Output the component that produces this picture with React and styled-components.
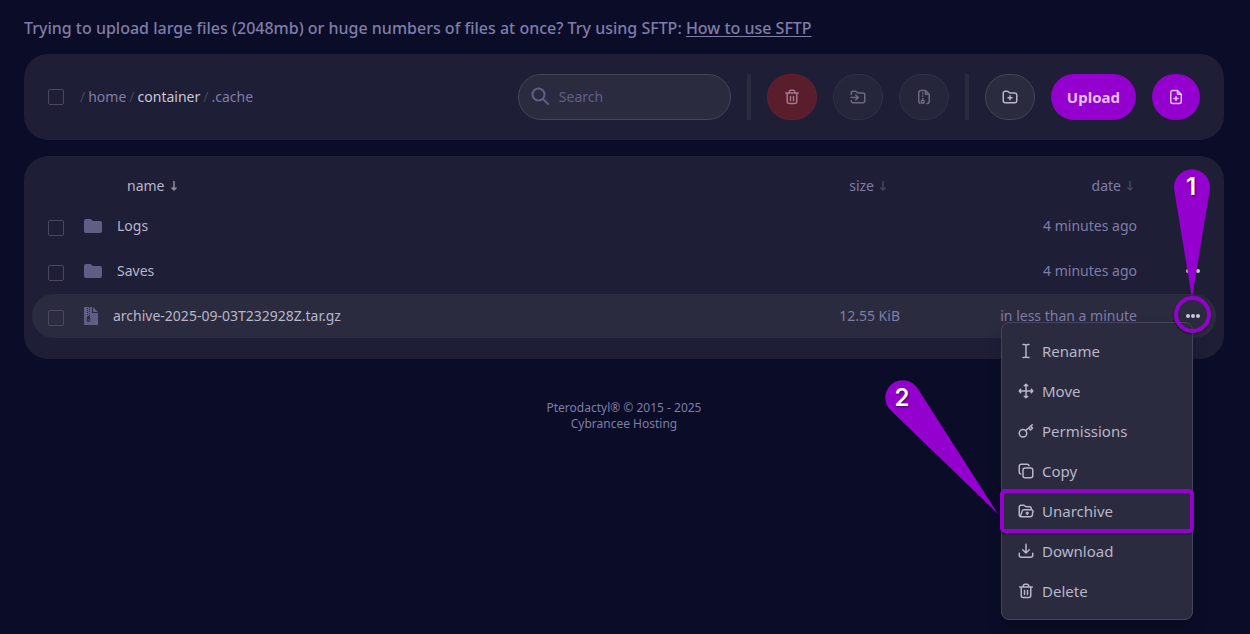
import React from 'react';
import styled, { createGlobalStyle, css } from 'styled-components';

const GlobalStyle = createGlobalStyle`
  * {
    box-sizing: border-box;
  }

  body {
    margin: 0;
    background: #0b0c28;
    color: #b8b6c9;
    font-family: "Noto Sans", "Open Sans", sans-serif;
    font-size: 14px;
    line-height: 20px;
  }

  button,
  input {
    font: inherit;
    color: inherit;
  }
`;

const Page = styled.main`
  min-height: 100vh;
  padding: 16px 26px 16px 24px;
`;

const Notice = styled.p`
  margin: 0 0 14px;
  font-size: 16px;
  font-weight: 500;
  line-height: 24px;
  color: #7f7da7;

  a {
    color: inherit;
    text-decoration: underline;
    text-underline-offset: 2px;
  }
`;

const Panel = styled.section`
  background: #1e1e37;
  border-radius: 24px;
`;

const Toolbar = styled(Panel)`
  display: flex;
  align-items: center;
  gap: 16px;
  padding: 20px 24px;
  margin-bottom: 16px;
`;

const Checkbox = styled.input.attrs({ type: 'checkbox' })`
  appearance: none;
  display: block;
  flex: none;
  width: 16px;
  height: 16px;
  margin: 0;
  border: 1px solid #4a4860;
  border-radius: 2px;
  background: transparent;

  &:checked {
    background: #9400cd;
  }
`;

const Breadcrumbs = styled.nav`
  display: flex;
  flex: 1;
  gap: 3px;
  color: #46455c;

  a {
    color: #7f7da7;
    text-decoration: none;
  }

  a[data-active='true'] {
    color: #c9c7d8;
  }
`;

const SearchBox = styled.label`
  display: flex;
  align-items: center;
  gap: 8px;
  width: 213px;
  height: 46px;
  padding: 0 12px;
  border: 1px solid #46445c;
  border-radius: 23px;
  background: #2b2b3f;
  color: #605e85;

  svg {
    flex: none;
  }

  input {
    width: 100%;
    min-width: 0;
    padding: 0;
    border: 0;
    outline: 0;
    background: none;
  }

  input::placeholder {
    color: #605e85;
    opacity: 1;
  }
`;

const Divider = styled.span`
  align-self: stretch;
  width: 4px;
  background: #2b2b3f;
`;

const variants = {
  neutral: css`
    border: 1px solid #46445c;
    background: #2b2b3f;
    color: #b8b6c9;
  `,
  danger: css`
    border: 1px solid #6c1e31;
    background: #591d2b;
    color: #a17a8a;
  `,
  disabled: css`
    border: 1px solid #31304a;
    background: #25253b;
    color: #6b6a82;
  `,
  primary: css`
    border: 0;
    background: #9400cd;
    color: #e3c0f2;
  `,
};

const Button = styled.button`
  display: flex;
  flex: none;
  align-items: center;
  justify-content: center;
  height: 46px;
  padding: 0 16px;
  border-radius: 23px;
  font-size: 15px;
  font-weight: 700;
  ${({ $variant }) => variants[$variant]}
`;

const FilesPanel = styled(Panel)`
  padding: 11px 8px 20px;
`;

const FileTable = styled.table`
  width: 100%;
  table-layout: fixed;
  border-collapse: separate;
  border-spacing: 0 1px;

  th,
  td {
    padding: 0;
    font-weight: 400;
    text-align: left;
  }
`;

const HeadRow = styled.tr`
  height: 35px;
`;

const CheckHead = styled.th`
  width: 52px;
`;

const SizeHead = styled.th`
  width: 200px;
`;

const DateHead = styled.th`
  width: 237px;
`;

const MenuHead = styled.th`
  width: 79px;
`;

const SortButton = styled.button`
  display: flex;
  align-items: center;
  gap: 5px;
  margin-left: ${({ $end }) => ($end ? 'auto' : '43px')};
  margin-right: ${({ $inset }) => ($inset ? '13px' : '3px')};
  padding: 0;
  border: 0;
  background: none;
  color: ${({ $active }) => ($active ? '#b8b6c9' : '#7f7da7')};

  svg {
    color: ${({ $active }) => ($active ? '#8e8c9f' : '#46455c')};
  }
`;

const Row = styled.tr`
  height: 44px;

  td {
    background: ${({ $active }) => ($active ? '#2b2b3f' : 'transparent')};
  }

  td:first-child {
    padding: 4px 0 0 16px;
    border-radius: 22px 0 0 22px;
  }

  td:last-child {
    border-radius: 0 22px 22px 0;
  }
`;

const FileLink = styled.a`
  display: flex;
  align-items: center;
  gap: 15px;
  color: #b8b6c9;
  text-decoration: none;

  svg {
    color: #605e85;
  }
`;

const Meta = styled.span`
  display: block;
  text-align: right;
  color: #7f7da7;
`;

const MenuCell = styled.td`
  position: relative;
`;

const MoreButton = styled.button`
  display: flex;
  align-items: center;
  justify-content: center;
  width: 36px;
  height: 36px;
  margin-left: 38px;
  padding: 0;
  border: 0;
  border-radius: 50%;
  background: none;
  color: #c9c7d8;
`;

const Menu = styled.ul`
  position: absolute;
  top: 28px;
  right: 23px;
  z-index: 1;
  width: 192px;
  margin: 0;
  padding: 8px 0;
  list-style: none;
  border: 1px solid #46445c;
  border-radius: 8px;
  background: #2b2b3f;
  box-shadow: 0 8px 16px rgba(0, 0, 0, 0.2);
`;

const MenuItem = styled.button`
  position: relative;
  display: flex;
  align-items: center;
  gap: 8px;
  width: 100%;
  height: 40px;
  padding: 0 16px;
  border: 0;
  background: none;
  color: #b8b6c9;
  font-size: 15px;

  ${({ $marked }) => $marked && css`
    &::after {
      content: '';
      position: absolute;
      inset: -2px;
      border: 4px solid #9400cd;
      border-radius: 5px;
      box-shadow: 0 1px 2px rgba(0, 0, 0, 0.6);
    }
  `}
`;

const Ring = styled.span`
  position: absolute;
  top: 2px;
  right: 5px;
  z-index: 2;
  width: 37px;
  height: 37px;
  border: 4px solid #9400cd;
  border-radius: 50%;
  box-shadow: 0 1px 2px rgba(0, 0, 0, 0.6);
  pointer-events: none;
`;

const Callout = styled.span`
  position: absolute;
  top: ${({ $top }) => $top}px;
  right: ${({ $right }) => $right}px;
  z-index: 2;
  pointer-events: none;

  svg {
    display: block;
  }

  b {
    position: absolute;
    top: 0;
    left: 0;
    width: 34px;
    color: #fff;
    font-family: Inter, "Liberation Sans", sans-serif;
    font-size: 24px;
    font-weight: 600;
    line-height: 36px;
    text-align: center;
    text-shadow: 1px 1px 2px rgba(0, 0, 0, 0.5);
  }
`;

const Footer = styled.footer`
  padding-top: 41px;
  font-size: 12px;
  line-height: 16px;
  text-align: center;
  color: #7f7da7;

  p {
    margin: 0;
  }
`;

const Icon = ({ size = 16, children }) => (
  <svg
    width={size}
    height={size}
    viewBox="0 0 16 16"
    fill="none"
    stroke="currentColor"
    strokeWidth="1.5"
    strokeLinecap="round"
    strokeLinejoin="round"
    aria-hidden="true"
  >
    {children}
  </svg>
);

const TrashIcon = () => (
  <Icon>
    <path d="M1.75 4h12.5M5.25 3.75V3A1.75 1.75 0 0 1 7 1.25h2A1.75 1.75 0 0 1 10.75 3v.75M3.25 4.5v8a2 2 0 0 0 2 2h5.5a2 2 0 0 0 2-2v-8M6.5 7.5v4M9.5 7.5v4" />
  </Icon>
);

const MoveToIcon = () => (
  <Icon>
    <path d="M1.25 5.5V4A1.75 1.75 0 0 1 3 2.25h2.2c.5 0 .9.2 1.2.5l.7.7c.3.3.7.5 1.2.5H13A1.75 1.75 0 0 1 14.75 5.7V12A1.75 1.75 0 0 1 13 13.75H3A1.75 1.75 0 0 1 1.25 12v-.5M1 8.5h7M5.75 6l2.5 2.5L5.75 11" />
  </Icon>
);

const FileZipIcon = () => (
  <Icon>
    <path d="M4 14.25A1.5 1.5 0 0 1 2.75 12.75V3.5A2 2 0 0 1 4.75 1.5H9.5L13.25 5.25v7.25a2 2 0 0 1-2 2H11M9.5 1.75V5.25H13" />
    <path d="M6.75 4v.5M6.75 6.75v.5M6.75 9.5v1" />
    <circle cx="6.75" cy="12.75" r="1.5" />
  </Icon>
);

const FolderPlusIcon = () => (
  <Icon>
    <path d="M1.25 4.25A2 2 0 0 1 3.25 2.25h1.9c.5 0 .9.2 1.2.5l.7.7c.3.3.7.5 1.2.5h4.5a2 2 0 0 1 2 2v5.8a2 2 0 0 1-2 2h-9.5a2 2 0 0 1-2-2zM8 6.75v4M6 8.75h4" />
  </Icon>
);

const FilePlusIcon = () => (
  <Icon>
    <path d="M2.75 3.5a2 2 0 0 1 2-2H9.5L13.25 5.25v7.25a2 2 0 0 1-2 2h-6.5a2 2 0 0 1-2-2zM9.5 1.75V5.25H13M8 7.5v4M6 9.5h4" />
  </Icon>
);

const CursorIcon = () => (
  <Icon>
    <path d="M5 1.5h1.25C7.25 1.5 8 2 8 2.75 8 2 8.75 1.5 9.75 1.5H11M5 14.5h1.25c1 0 1.75-.5 1.75-1.25 0 .75.75 1.25 1.75 1.25H11M8 2.75v10.5" />
  </Icon>
);

const ArrowsIcon = () => (
  <Icon>
    <path d="M8 1.25v13.5M1.25 8h13.5M6.25 2.75 8 1.25l1.75 1.5M6.25 13.25 8 14.75l1.75-1.5M2.75 6.25 1.25 8l1.5 1.75M13.25 6.25 14.75 8l-1.5 1.75" />
  </Icon>
);

const KeyIcon = () => (
  <Icon>
    <circle cx="5" cy="10.25" r="3.75" />
    <path d="m7.75 7.5 6.5-5.75M11 5l1.5 2 2-1.75L13 3.25" />
  </Icon>
);

const CopyIcon = () => (
  <Icon>
    <rect x="5" y="5" width="9.75" height="9.75" rx="2" />
    <path d="M2.75 11A1.75 1.75 0 0 1 1.25 9.25V3.25a2 2 0 0 1 2-2h6A1.75 1.75 0 0 1 11 2.75" />
  </Icon>
);

const UnarchiveIcon = () => (
  <Icon>
    <path d="M13.25 6V5.5a1.75 1.75 0 0 0-1.75-1.75H8.5c-.5 0-.9-.2-1.2-.5l-.5-.5c-.3-.3-.7-.5-1.2-.5H3A1.75 1.75 0 0 0 1.25 4v7.75a2 2 0 0 0 2 2h9.2a2 2 0 0 0 1.9-1.5l.5-3.5A1.5 1.5 0 0 0 13.4 6.75H6a2 2 0 0 0-1.9 1.4L2.5 13.25M9.25 11.5V9.5M8.25 10l1-.75 1 .75" />
  </Icon>
);

const DownloadIcon = () => (
  <Icon>
    <path d="M8 1.25v8.5M4.75 6.75 8 10l3.25-3.25M1.25 10.25v2a2 2 0 0 0 2 2h9.5a2 2 0 0 0 2-2v-2" />
  </Icon>
);

const DotsIcon = () => (
  <svg width="16" height="16" viewBox="0 0 16 16" fill="currentColor" aria-hidden="true">
    <circle cx="3" cy="8" r="2" />
    <circle cx="8" cy="8" r="2" />
    <circle cx="13" cy="8" r="2" />
  </svg>
);

const SearchIcon = () => (
  <svg width="20" height="20" viewBox="0 0 20 20" fill="none" stroke="currentColor" strokeWidth="2" strokeLinecap="round" aria-hidden="true">
    <circle cx="7.5" cy="7.5" r="6" />
    <path d="m12 12 5 5" />
  </svg>
);

const SortIcon = () => (
  <svg width="8" height="12" viewBox="0 0 8 12" fill="none" stroke="currentColor" strokeWidth="1.5" aria-hidden="true">
    <path d="M4 1v9M1.5 7.5 4 10l2.5-2.5" />
  </svg>
);

const FolderIcon = () => (
  <svg width="18" height="14" viewBox="0 0 18 14" fill="currentColor" aria-hidden="true">
    <path d="M0 2a2 2 0 0 1 2-2h4.5L9 2h7a2 2 0 0 1 2 2v8a2 2 0 0 1-2 2H2a2 2 0 0 1-2-2z" />
  </svg>
);

const ArchiveIcon = () => (
  <svg width="14" height="18" viewBox="0 0 14 18" aria-hidden="true">
    <path fill="currentColor" d="M0 0h8v6h6v12H0zM9 0l5 5H9z" />
    <path fill="none" stroke="#2b2b3f" strokeDasharray="1 1" d="M3.5 1v8M5.5 0v9" />
    <path fill="#2b2b3f" d="M3.5 9h2l1 4a2 2 0 0 1-4 0z" />
    <path fill="currentColor" d="M3.5 12.5h2v1h-2z" />
  </svg>
);

const crumbs = ['home', 'container', '.cache'];

const files = [
  { name: 'Logs', folder: true, date: '4 minutes ago' },
  { name: 'Saves', folder: true, date: '4 minutes ago' },
  {
    name: 'archive-2025-09-03T232928Z.tar.gz',
    size: '12.55 KiB',
    date: 'in less than a minute',
    open: true,
  },
];

const actions = [
  { label: 'Rename', icon: CursorIcon },
  { label: 'Move', icon: ArrowsIcon },
  { label: 'Permissions', icon: KeyIcon },
  { label: 'Copy', icon: CopyIcon },
  { label: 'Unarchive', icon: UnarchiveIcon, marked: true },
  { label: 'Download', icon: DownloadIcon },
  { label: 'Delete', icon: TrashIcon },
];

const FileMenu = () => (
  <Menu>
    {actions.map(({ label, icon: ActionIcon, marked }) => (
      <li key={label}>
        <MenuItem type="button" $marked={marked}>
          <ActionIcon />
          {label}
        </MenuItem>
      </li>
    ))}
  </Menu>
);

const Callouts = () => (
  <>
    <Ring />
    <Callout $top={-125} $right={6}>
      <svg width="36" height="130" viewBox="0 0 36 130">
        <path fill="#9400cd" d="M35.8 21 18 129 .2 21A18 18 0 1 1 35.8 21z" />
      </svg>
      <b>1</b>
    </Callout>
    <Callout $top={86} $right={217}>
      <svg width="114" height="135" viewBox="0 0 114 135">
        <path fill="#9400cd" d="M32.7 8.6 113 134 5.9 30.6A17.5 17.5 0 1 1 32.7 8.6z" />
      </svg>
      <b>2</b>
    </Callout>
  </>
);

const FileRow = ({ file }) => (
  <Row $active={file.open}>
    <td>
      <Checkbox aria-label={`Select ${file.name}`} />
    </td>
    <td>
      <FileLink href="#">
        {file.folder ? <FolderIcon /> : <ArchiveIcon />}
        {file.name}
      </FileLink>
    </td>
    <td>
      <Meta>{file.size}</Meta>
    </td>
    <td>
      <Meta>{file.date}</Meta>
    </td>
    <MenuCell>
      <MoreButton type="button" aria-label={`Actions for ${file.name}`}>
        <DotsIcon />
      </MoreButton>
      {file.open && <FileMenu />}
      {file.open && <Callouts />}
    </MenuCell>
  </Row>
);

const App = () => (
  <>
    <GlobalStyle />
    <Page>
      <Notice>
        Trying to upload large files (2048mb) or huge numbers of files at once? Try using SFTP:
        {' '}
        <a href="#">How to use SFTP</a>
      </Notice>
      <Toolbar>
        <Checkbox aria-label="Select all files" />
        <Breadcrumbs aria-label="Path">
          {crumbs.map(crumb => (
            <React.Fragment key={crumb}>
              <span>/</span>
              <a href="#" data-active={crumb === 'container'}>{crumb}</a>
            </React.Fragment>
          ))}
        </Breadcrumbs>
        <SearchBox>
          <SearchIcon />
          <input type="text" placeholder="Search" aria-label="Search" />
        </SearchBox>
        <Divider />
        <Button type="button" $variant="danger" aria-label="Delete"><TrashIcon /></Button>
        <Button type="button" $variant="disabled" aria-label="Move"><MoveToIcon /></Button>
        <Button type="button" $variant="disabled" aria-label="Archive"><FileZipIcon /></Button>
        <Divider />
        <Button type="button" $variant="neutral" aria-label="New folder"><FolderPlusIcon /></Button>
        <Button type="button" $variant="primary">Upload</Button>
        <Button type="button" $variant="primary" aria-label="New file"><FilePlusIcon /></Button>
      </Toolbar>
      <FilesPanel>
        <FileTable>
          <thead>
            <HeadRow>
              <CheckHead />
              <th><SortButton type="button" $active>name <SortIcon /></SortButton></th>
              <SizeHead><SortButton type="button" $end $inset>size <SortIcon /></SortButton></SizeHead>
              <DateHead><SortButton type="button" $end>date <SortIcon /></SortButton></DateHead>
              <MenuHead />
            </HeadRow>
          </thead>
          <tbody>
            {files.map(file => <FileRow key={file.name} file={file} />)}
          </tbody>
        </FileTable>
      </FilesPanel>
      <Footer>
        <p>Pterodactyl® © 2015 - 2025</p>
        <p>Cybrancee Hosting</p>
      </Footer>
    </Page>
  </>
);

export default App;
